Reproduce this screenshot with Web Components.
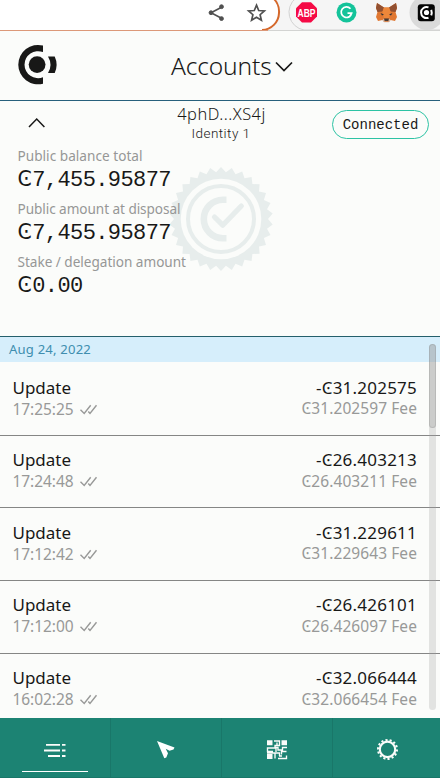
<!DOCTYPE html>
<html lang="en"><head><meta charset="utf-8"><title>Accounts</title>
<style>
html,body{margin:0;height:100%;overflow:hidden;background:#fbfcfa;font-family:"Noto Sans","DejaVu Sans",sans-serif;color:#181817}
</style></head><body>
<wallet-app></wallet-app>
<script>
const define=(name,html,after)=>customElements.define(name,class extends HTMLElement{
  connectedCallback(){
    if(this.shadowRoot)return;
    const root=this.attachShadow({mode:'open'});
    root.innerHTML=typeof html==='function'?html(this):html;
    if(after)after(this,root);
  }
});

/* A single line of text, tracked so that it fills the width in "w". */
define('fit-label','<style>:host{display:block;white-space:pre}span{display:inline-block}</style><span></span>',(el,root)=>{
  const s=root.querySelector('span');
  s.textContent=el.getAttribute('text');
  const w=parseFloat(el.getAttribute('w'));
  const natural=s.getBoundingClientRect().width;
  const n=[...s.textContent].length;
  s.style.letterSpacing=((w-natural)/n).toFixed(3)+'px';
});

define('browser-bar',`<style>:host{display:block;height:31px;background:#f5f5f5}svg{display:block}</style>
<svg width="440" height="31" viewBox="0 0 440 31">
<path d="M-5-5H262A17.5 17.5 0 0 1 279 12.500A17.500 17.500 0 0 1 262 30H-5z" fill="#fff"/>
<path d="M270-4A18 18 0 0 1 279 13A17.500 17.500 0 0 1 262 30" fill="none" stroke="#d5682b" stroke-width="2"/>
<path d="M296-2A18 18 0 0 0 304 30H440" fill="none" stroke="#d2d2d2"/>
<path d="M0 30.500H268" stroke="#dc9878"/><path d="M268 30.500H440" stroke="#d3d4d2"/>
<g fill="#505050" stroke="#505050"><path d="M222 7L211 12.800L222 18.500" fill="none" stroke-width="1.600"/><circle cx="221.500" cy="6.700" r="1.900"/><circle cx="211" cy="12.700" r="1.900"/><circle cx="221.500" cy="18.600" r="1.900"/></g>
<path d="M256.500 5.200L258.700 10.500L264.400 11L260.100 14.700L261.400 20.300L256.500 17.300L251.600 20.300L252.900 14.700L248.600 11L254.300 10.500Z" fill="none" stroke="#505050" stroke-width="1.700"/>
<path d="M302 2.200H311L317 8.300V16.500L311 22.500H302L296 16.500V8.300Z" fill="#f50a45"/>
<text x="306.500" y="16.600" text-anchor="middle" textLength="18" lengthAdjust="spacingAndGlyphs" font-family="Liberation Sans" font-weight="700" font-size="11.500" fill="#fff">ABP</text>
<circle cx="346.500" cy="12.400" r="10" fill="#14c39a"/>
<path d="M350.500 8.700A5.300 5.300 0 1 0 351.700 13.200H347.500M349.300 17L351.700 13.200" fill="none" stroke="#fff" stroke-width="1.700"/>
<path d="M377 3L384 7.500H389L396 3L397 8L395.500 12L397 17L395 21L390.500 20L389 22H384L382.500 20L378 21L376 17L377.500 12L376 8Z" fill="#e17832"/>
<path d="M377 3L384 7.500L382.500 11.500L377.500 12L376 8ZM396 3L389 7.500L390.500 11.500L395.500 12L397 8Z" fill="#925031"/>
<path d="M382.500 11.500L384 7.500H389L390.500 11.500L389 18H384Z" fill="#ee873a"/><path d="M380.500 13L384 14.500L382 15.500ZM392.500 13L389 14.500L391 15.500Z" fill="#303238"/><path d="M384 18.500H389L388.500 21H384.500Z" fill="#473b36"/><path d="M382.500 20L384 18.500L384.500 21.700H388.500L389 18.500L390.500 20L389 22.200H384Z" fill="#d1bcb0"/>
<circle cx="427" cy="12.500" r="17.500" fill="#dadada"/>
<rect x="417.800" y="4.200" width="17" height="17" rx="3" fill="#050505"/>
<g fill="none" stroke="#fff" stroke-width="2"><path d="M428.500 7.400A5.500 5.500 0 1 0 428.500 17.700"/><path d="M431.200 9.800Q432.200 12.500 431.200 15.300"/></g><circle cx="426.500" cy="12.500" r="2.600" fill="#fff"/>
</svg>`);

define('account-header',`<style>
:host{display:grid;grid-template-columns:171px 1fr;height:69px;border-bottom:1px solid #27607c}
.logo{margin:12px 0 0 16px}
.title{display:flex;font-weight:300;font-size:24.500px;line-height:33px;padding-top:18px}
.title svg{margin:11.500px 0 0 3.500px}
</style>
<svg class="logo" width="44" height="44" viewBox="0 0 44 44" fill="#181817"><circle cx="21.100" cy="21.600" r="8.400"/><path d="M27 2.600A19.700 19.700 0 1 0 27 40.700V34.200A13.500 13.500 0 1 1 27 9.100Z"/><path d="M32 13.400H38.700Q42.500 21.500 38.700 30.100H32Q37 21.800 32 13.400Z"/></svg>
<div class="title"><fit-label text="Accounts" w="100.500"></fit-label><svg width="18" height="14" viewBox="0 0 18 14"><path d="M1 1.500L9 9.500L17 1.500" fill="none" stroke="#181817" stroke-width="1.700"/></svg></div>`);

define('account-identity',`<style>
:host{display:grid;grid-template-columns:100px 1fr 108px;height:46px}
.up{margin:15px 0 0 28px}
.who{display:flex;flex-direction:column;align-items:center}
.name{font-size:16.400px;font-weight:300;line-height:20px;margin-top:3px;margin-left:11px}
.id{font-family:Roboto,sans-serif;font-size:13.500px;line-height:16px;margin-top:.500px;margin-left:10px;font-weight:300}
.pill{box-sizing:border-box;width:97px;height:29px;margin-top:9px;border:1.300px solid #2dc3a4;border-radius:15px;display:flex;align-items:center;justify-content:center;font:14px/16px "Liberation Mono",monospace}
</style>
<svg class="up" width="18" height="14" viewBox="0 0 18 14"><path d="M1 11L8.700 3L16.400 11" fill="none" stroke="#181817" stroke-width="1.500"/></svg>
<div class="who"><fit-label class="name" text="4phD...XS4j" w="88.500"></fit-label><fit-label class="id" text="Identity 1" w="59"></fit-label></div>
<div class="pill">Connected</div>`);

define('balance-item',el=>`<style>
:host{display:block;height:53px;padding-left:17.500px}
.l{font-size:13.600px;line-height:18px;color:#969796}
.v{font:22px/27px "Liberation Mono","DejaVu Sans Mono",monospace;letter-spacing:-.590px;white-space:pre;padding-top:2px}
.c{font-family:"DejaVu Sans";font-size:20.500px;display:inline-block;width:14.700px;line-height:20px}
</style><fit-label class="l" text="${el.getAttribute('label')}" w="${el.getAttribute('w')}"></fit-label><div class="v"><span class="c">Ͼ</span>${el.getAttribute('value')}</div>`);

define('verified-seal',`<style>:host{display:block;width:106px;height:106px}</style><svg width="106" height="106" viewBox="-53 -53 106 106"></svg>`,(el,root)=>{
  const pts=[],n=30;
  for(let i=0;i<n*2;i++){const a=-Math.PI/2+i*Math.PI/n,r=i%2?47:52;pts.push((r*Math.cos(a)).toFixed(1)+','+(r*Math.sin(a)).toFixed(1));}
  root.querySelector('svg').innerHTML=`<polygon points="${pts.join(' ')}" fill="#e7edec"/><circle r="40.300" fill="#fbfcfa"/><circle r="33" fill="none" stroke="#e7edec" stroke-width="4"/><path d="M5.500-19.200H2A19.200 19.200 0 0 0 2 19.200H5.500" fill="none" stroke="#e7edec" stroke-width="6.600"/><path d="M-6.500-2L1.700 6.200L20.300-13" fill="none" stroke="#e7edec" stroke-width="5.200" stroke-linejoin="round" stroke-linecap="round"/>`;
});

define('balance-panel',`<style>
:host{display:block;position:relative;height:189px;border-bottom:1px solid #245f6b}
verified-seal{position:absolute;left:168px;top:18.500px}
.list{position:relative}
</style><verified-seal></verified-seal><div class="list">
<balance-item label="Public balance total" w="125" value="7,455.95877"></balance-item>
<balance-item label="Public amount at disposal" w="163" value="7,455.95877"></balance-item>
<balance-item label="Stake / delegation amount" w="168.500" value="0.00"></balance-item></div>`);

define('transaction-row',el=>`<style>
:host{display:flex;justify-content:space-between;box-sizing:border-box;height:72.600px;padding:13.500px 23px 0 12.500px;border-bottom:1px solid #858685}
:host([first]){height:73.800px;padding-top:14.500px}
.t{font-size:17px;line-height:22px}
.s{font-size:15.500px;line-height:20px;color:#989998}
.right{display:flex;flex-direction:column;align-items:flex-end}
.time{display:flex}
.right .s{margin-top:-.500px}
.time svg{margin:5px 0 0 6px}
</style>
<div><fit-label class="t" text="Update" w="58.500"></fit-label><div class="time s"><fit-label text="${el.getAttribute('time')}" w="61"></fit-label><svg width="18" height="11" viewBox="0 0 18 11"><path d="M.5 5.800L4.200 9.500L10.700 1.200M8.300 7.500L10 9.500L16.500 1.200" fill="none" stroke="#989998" stroke-width="1.400"/></svg></div></div>
<div class="right"><fit-label class="t" text="-Ͼ${el.getAttribute('amount')}" w="101"></fit-label><fit-label class="s" text="Ͼ${el.getAttribute('fee')} Fee" w="115.500"></fit-label></div>`);

define('transaction-list',`<style>
:host{display:block;position:relative;height:381px;overflow:hidden}
.date{height:25px;background:#d6eefb;color:#408eaf;font-size:13.100px;line-height:24px;padding-left:9px}
.track{position:absolute;right:4px;top:7px;width:7px;height:366px;border-radius:4px;background:rgba(160,160,160,.28)}
.thumb{height:84px;border-radius:4px;background:rgba(145,145,145,.28);box-shadow:inset 0 0 0 1px rgba(110,110,110,.2)}
</style><div class="date"><fit-label text="Aug 24, 2022" w="82"></fit-label></div>
<transaction-row first time="17:25:25" amount="31.202575" fee="31.202597"></transaction-row>
<transaction-row time="17:24:48" amount="26.403213" fee="26.403211"></transaction-row>
<transaction-row time="17:12:42" amount="31.229611" fee="31.229643"></transaction-row>
<transaction-row time="17:12:00" amount="26.426101" fee="26.426097"></transaction-row>
<transaction-row style="border:0" time="16:02:28" amount="32.066444" fee="32.066454"></transaction-row>
<div class="track"><div class="thumb"></div></div>`);

define('nav-tab',`<style>
:host{display:flex;position:relative;justify-content:center;box-sizing:border-box;padding-top:19px;border-right:1px solid #197769;border-bottom:1px solid #197769}
:host(:last-child){border-right:0}
:host([active])::after{content:"";position:absolute;left:22px;right:22px;bottom:5px;height:1px;background:#fff}
</style><slot></slot>`);

define('bottom-nav',`<style>
:host{display:grid;grid-template-columns:111px 111px 111px 107px;height:60px;background:#1c8373}
svg{display:block}
</style>
<nav-tab active><svg width="24" height="24" viewBox="0 0 24 24" stroke="#fbfcfa" stroke-width="1.800"><path d="M3 7.800H17M19 7.800H22.500M1 13.500H17M19 13.500H22.500M5 19H17M19 19H22.500"/></svg></nav-tab>
<nav-tab><svg width="24" height="24" viewBox="0 0 24 24"><path d="M3 4L20.500 10.600L19.500 12.500L15.500 13.800L11.700 11.800L14 16.200L12.300 20.500L10.300 21.300Z" fill="#fff"/></svg></nav-tab>
<nav-tab><svg width="24" height="24" viewBox="0 0 24 24"><g fill="#fbfcfa"><path d="M2 3.300H7.500V8.300H2ZM16.500 3.300H22V8.300H16.500ZM2 17H7.500V22H2Z"/></g><path d="M9 4H14.500V8.500H10V11H2.500V14.500H8M12 5.500V8.500M22 10.500H17.500V13H13V10.500H11V15M2 16H10V21.500M10 16H14.500V19M13 21.500H21.500V18.500M16.500 17.500V14.500H21.500M17 19H14" fill="none" stroke="#fbfcfa" stroke-width="1.350"/></svg></nav-tab>
<nav-tab><svg width="24" height="24" viewBox="0 0 24 24" fill="none" stroke="#fbfcfa"><circle cx="12.500" cy="12.400" r="7.700" stroke-width="2.200"/><circle cx="12.500" cy="12.400" r="9.500" stroke-width="2" pathLength="28" stroke-dasharray="1 1"/></svg></nav-tab>`);

define('wallet-app',`<style>:host{display:flex;flex-direction:column;width:440px;height:778px;overflow:hidden;background:#fbfcfa}:host>*{flex:none}</style>
<browser-bar></browser-bar><account-header></account-header><account-identity></account-identity><balance-panel></balance-panel><transaction-list></transaction-list><bottom-nav></bottom-nav>`);
</script></body></html>
